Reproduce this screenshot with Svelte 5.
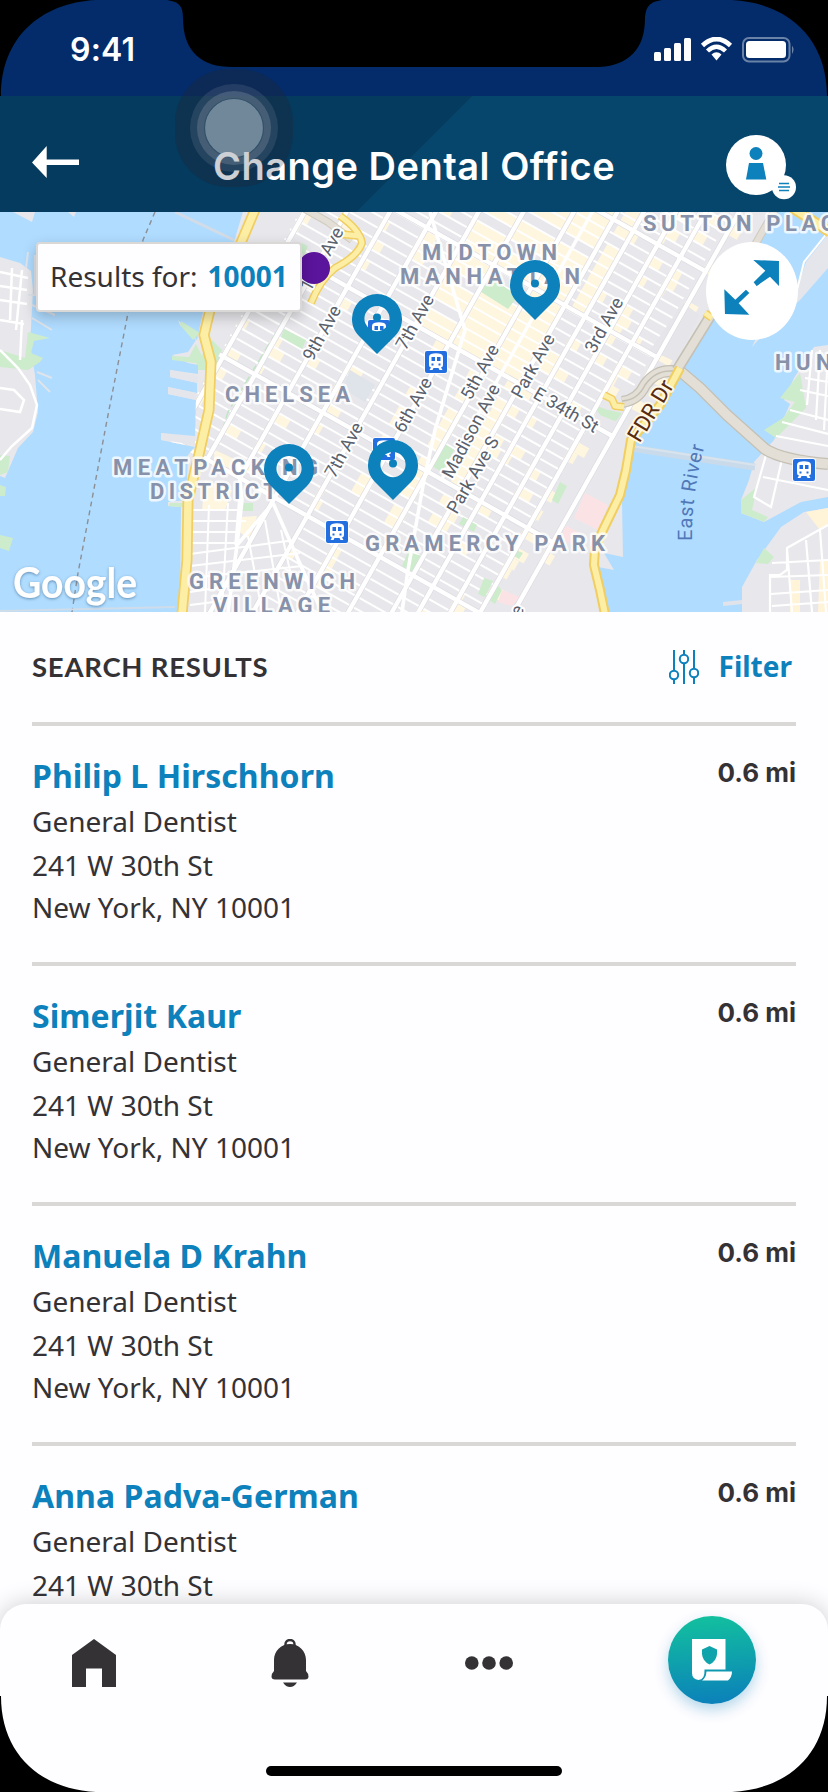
<script>
  const offices = [
    { name: 'Philip L Hirschhorn' },
    { name: 'Simerjit Kaur' },
    { name: 'Manuela D Krahn' },
    { name: 'Anna Padva-German' }
  ];

  const pins = [
    [377, 294],
    [535, 260],
    [289, 444],
    [393, 440]
  ];
  const stations = [
    [425, 351],
    [326, 521],
    [793, 459],
    [373, 438],
    [368, 320]
  ];

  // Manhattan grid in rotated coordinates: avenues run along v, streets along u.
  const avenues = [369.5, 406, 443.6, 483.6, 521, 560, 604, 642, 665, 693, 719, 748];
  const majors = [-110, -11.3, 79.3, 201, 298.6];
  const streets = [];
  for (let k = -26; k < 33; k++) streets.push(79.3 + 11.05 * k);

  const hash = (a, b) => {
    const s = Math.sin(a * 127.1 + b * 311.7) * 43758.5453;
    return s - Math.floor(s);
  };
  const blocks = [];
  streets.forEach((v, j) => {
    avenues.forEach((u, i) => {
      const w = (avenues[i + 1] ?? u + 34) - u;
      const r = hash(i + 1, j + 1);
      const midtown = u > 515 && u < 660 && v < 75;
      const core = midtown && u < 610;
      const flat = u > 510 && u < 640 && v > 75 && v < 260;
      if (core && r < 0.82) blocks.push([u, v, w]);
      else if (midtown && r < 0.75) blocks.push([u + w * 0.3, v, w * 0.7]);
      else if (flat && r < 0.5) blocks.push([u + w - 13, v, 16]);
      else if (r < 0.26) blocks.push([u - 3, v, 6 + r * 50]);
    });
  });

  const areas = [
    ['CHELSEA', 225, 402, 125],
    ['MIDTOWN', 422, 260, 135],
    ['MANHATTAN', 400, 284, 180],
    ['SUTTON PLACE', 643, 231, 209],
    ['HUNTERS', 775, 370, 132],
    ['MEATPACKING', 113, 475, 205],
    ['DISTRICT', 150, 499, 127],
    ['GRAMERCY PARK', 365, 551, 240],
    ['GREENWICH', 189, 589, 166],
    ['VILLAGE', 213, 613, 117]
  ];
  const roads = [
    ['9th Ave', 322, 333, -61],
    ['7th Ave', 415, 322, -61],
    ['7th Ave', 344, 450, -61],
    ['6th Ave', 413, 405, -61],
    ['5th Ave', 480, 372, -61],
    ['Madison Ave', 471, 431, -62],
    ['Park Ave S', 473, 475, -60],
    ['Park Ave', 533, 366, -61],
    ['3rd Ave', 604, 325, -61],
    ['11th Ave', 322, 259, -61],
    ['E 34th St', 566, 410, 30],
    ['Avenue', 505, 632, -61]
  ];
</script>

{#snippet train(x, y)}
  <g transform="translate({x} {y})">
    <rect x="-1" y="-1" width="24" height="24" rx="3" fill="#fff" opacity=".8" />
    <rect width="22" height="22" rx="2" fill="#246fe0" />
    <path d="M6 3Q11 1.5 16 3Q18 4 18 6V14Q18 16 16 16.5L17.5 19H14.5L13.5 17H8.5L7.5 19H4.500L6 16.500Q4 16 4 14V6Q4 4 6 3Z" fill="#fff" />
    <path d="M6.500 6H10V10H6.500ZM12 6H15.500V10H12ZM6.500 12.500H8.500V14.500H6.500ZM13.500 12.500H15.500V14.500H13.500Z" fill="#246fe0" />
  </g>
{/snippet}

<div class="phone">
  <div class="status">
    <span class="time">9:41</span>
    <svg width="142" height="26" viewBox="0 0 142 26">
      <g fill="#fff">
        <rect x="1" y="15" width="7" height="9" rx="1.500" />
        <rect x="11" y="11" width="7" height="13" rx="1.500" />
        <rect x="21" y="6" width="7" height="18" rx="1.500" />
        <rect x="31" y="1" width="7" height="23" rx="1.500" />
        <path d="M58.500 17.500Q63.500 13 68.500 17.500L63.500 23.500Z" />
        <rect x="93" y="4" width="40" height="17" rx="3.500" />
      </g>
      <path d="M49.500 8.500Q63.500 -4.500 77.500 8.500" fill="none" stroke="#fff" stroke-width="4.600" />
      <path d="M54.500 14Q63.500 5.500 72.500 14" fill="none" stroke="#fff" stroke-width="4.400" />
      <rect x="90" y="1" width="46.500" height="23.500" rx="6" fill="none" stroke="#6b82a8" stroke-width="2" />
      <path d="M139 8.500Q142 12.500 139 17Z" fill="#6b82a8" />
    </svg>
  </div>

  <header>
    <svg class="back" width="48" height="32" viewBox="0 0 48 32">
      <path d="M0 16.500L14.700 0V13.500H47V19H14.700V32Z" fill="#fff" />
    </svg>
    <h1>Change Dental Office</h1>
    <svg class="user" width="70" height="65" viewBox="0 0 70 65">
      <circle cx="30" cy="30" r="30" fill="#fff" />
      <circle cx="30" cy="18.500" r="6.500" fill="#0c81bb" />
      <path d="M23 28H37L40.300 44.500H20Z" fill="#0c81bb" />
      <circle cx="58" cy="52.300" r="12" fill="#fff" />
      <path d="M53 48.500H63M52 52H64M53 55.500H63" stroke="#0c81bb" stroke-width="1.500" />
    </svg>
  </header>

  <section class="map">
    <svg class="canvas" width="828" height="400" viewBox="0 212 828 400">
      <defs>
        <clipPath id="island">
          <path d="M245 205L236 235L228 270L203 312L197 340L178 320L180 325L196 340L188 352L172 355L188 363L198 365V374L170 370V377L197 383V393L168 387V394L196 400L195 438L161 433V440L195 447L188 455L186 500L168 502V506L181 507L180 612H609L598 567L614 570L604 553L623 557L622 503L634 440L659 408L681 366L712 320L755 240L782 205Z" />
        </clipPath>
        <filter id="soft" x="-20%" y="-20%" width="140%" height="150%">
          <feDropShadow dx="0" dy="1" stdDeviation="1.500" flood-color="#3c6a90" flood-opacity=".7" />
        </filter>
      </defs>
      <rect y="212" width="828" height="400" fill="#b0dcff" />

      <!-- New Jersey shore -->
      <path d="M13 212H35L32 222ZM68 212H76L74 217Z" fill="#e8e7eb" />
      <path d="M0 257L20 263L31 271L33 290L30 345L35 375L38 412L33 432L18 448L5 478L0 476Z" fill="#e8e7eb" />
      <path d="M28 332L50 338L34 341L31 353L43 358L40 362L28 370L0 367V350L25 358Z" fill="#cdeccc" />
      <path d="M0 455L10 456L8 472L0 475ZM0 485L6 487L5 496H0ZM0 535L13 538L9 551L0 548Z" fill="#cdeccc" />
      <path d="M0 272L28 278M0 286L27 290M0 300L27 304M0 320L24 324M12 268L10 320M22 270L16 330M0 350L18 368L30 385L37 405L32 428L12 446L0 460M0 388L14 390L24 400L20 412L0 409M22 320L20 360" fill="none" stroke="#fff" stroke-width="2.500" />
      <path d="M32 318L52 330M32 305L55 315M38 380L50 392M37 372L52 378M28 295H35V255M28 252L26 268" fill="none" stroke="#dfe3ea" stroke-width="2" />
      <path d="M175 212L236 241" stroke="#d3dce6" stroke-width="3" />
      <path d="M155 212L143 240L128 313L108 415L78 573L72 612" fill="none" stroke="#8d8f94" stroke-width="1.400" stroke-dasharray="5 4" />
      <path d="M0 611L175 607" stroke="#cfdcea" stroke-width="2" />

      <!-- Queens and Roosevelt Island -->
      <path d="M828 234L806 262L796 292L760 338L752 347L756 338L800 300L828 268Z" fill="#e4e6ec" />
      <path d="M828 232L804 262L797 290" fill="none" stroke="#fff" stroke-width="2" />
      <path d="M828 345L814 347L794 378L784 400L790 404L774 440L754 462L749 480L741 500V513L764 522L801 502L828 497Z" fill="#e8e7eb" />
      <path d="M800 373L780 398L795 402L783 418L764 430L776 438L806 408ZM757 487L741 500V513L764 522L768 517L752 510Z" fill="#cdeccc" />
      <path d="M828 508L804 512L781 527L757 560L742 587V612H828Z" fill="#e8e7eb" />
      <path d="M828 508L806 512L820 530L828 525ZM790 580H800V612H790ZM820 560H828V612H818Z" fill="#fff3d8" />
      <path d="M764 548L774 557L768 564L756 563Z" fill="#cdeccc" />
      <path d="M742 602L723 604" stroke="#e0e4ea" stroke-width="4" />
      <path d="M812 350L807 405M820 350L816 420M805 378L828 382M800 390L828 396M790 410L828 420M782 422L828 434M776 436L828 446M828 352L824 430M766 455L754 497L771 507L783 455M763 477L828 490M828 525L787 548V570L780 575H770V612M828 560L772 563M828 575L770 577M828 590L771 594M828 602L772 606M787 548L792 612M806 540L812 612M820 530L826 612" fill="none" stroke="#fff" stroke-width="2.200" />

      <!-- Manhattan -->
      <g clip-path="url(#island)">
        <rect y="205" width="828" height="410" fill="#e8e7eb" />
        <g transform="rotate(29.4)">
          {#each blocks as [u, v, w]}
            <rect x={u} y={v} width={w} height="11.050" fill="#fff6df" />
          {/each}
          {#each streets as v}
            <path d="M{v > 310 ? 520 : 365} {v}H{v < 30 ? 742 : 722}" stroke="#fff" stroke-width="2" />
          {/each}
        </g>
        <path d="M186 505L273 495L300 510L262 612H180Z" fill="#e8e7eb" />
        <path d="M600 438L635 445L620 500L600 535L560 512ZM545 575L595 560L605 612H520Z" fill="#e8e7eb" />
        <path d="M683 303L700 315L676 362L650 350Z" fill="#e6e5ea" />
        <path d="M585 493L608 505L598 530L574 518Z" fill="#fbe3e5" />
        <path d="M565 525L580 533L572 545L562 538ZM502 590L520 597L512 606L498 602Z" fill="#fbe3e5" />
        <path d="M205 480L232 490L225 510H202ZM240 517L257 516L250 540L237 530ZM215 450L236 460L230 475L213 466Z" fill="#fff6df" />
        <path d="M350 370L375 385L365 402L342 388Z" fill="#dfe3ea" />
        <g fill="#cdeccc">
          <path d="M490 277L518 296L508 309L478 290ZM442 442L454 450L442 472L430 465ZM284 329L306 340L302 349L281 337ZM463 517L477 525L474 532L459 524ZM560 482L567 486L558 504L552 500ZM484 578L493 581L485 597L478 594ZM497 585L502 590L495 604L489 600ZM408 552L422 556L414 573L402 566ZM604 409L622 413L616 421L603 415ZM594 405L619 414L615 421L600 415ZM516 550L523 553L519 559L514 556ZM170 503H183V507H168ZM164 581H182V586H164ZM140 597H180V601H140ZM243 503H253V511H242ZM192 370L212 340L222 350L215 370ZM302 243L308 246L304 256L299 250Z" />
        </g>
        <path d="M283 321L228 412L217 447" fill="none" stroke="#bfe6c2" stroke-width="1.500" stroke-dasharray="9 4" />
        <g transform="rotate(29.4)" fill="none">
          {#each avenues as u}
            <path d="M{u} -240V{u < 480 ? 298 : 450}" stroke="#d9d9e0" stroke-width="5.600" />
          {/each}
          {#each majors as v}
            <path d="M365 {v}H750" stroke="#d9d9e0" stroke-width="5.600" />
          {/each}
          {#each avenues as u}
            <path d="M{u} -240V{u < 480 ? 298 : 450}" stroke="#fff" stroke-width="4.400" />
          {/each}
          {#each majors as v}
            <path d="M365 {v}H750" stroke="#fff" stroke-width="4.400" />
          {/each}
          <path d="M620 -200V200" stroke="#fff" stroke-width="3.400" />
        </g>
        <path d="M430 212L465 330L435 430L424 480L408 570L402 612M273 503L305 575L322 612M273 503L237 545L228 612M240 497L236 545M238 463L242 500L237 545" fill="none" stroke="#fff" stroke-width="3.600" />
        <path d="M190 510H240M190 521H246M190 532H240M192 543H236M190 554L295 540M190 566L300 553M190 578L302 566M190 592L230 586M190 605L230 600M209 505L205 612M228 503L222 612M248 536L262 612M265 520L281 612M281 530L292 580" fill="none" stroke="#fff" stroke-width="2" />
      </g>
      <path d="M170 370L198 376V383L170 377ZM168 387L196 393V400L168 394ZM161 433L195 436V445L162 440Z" fill="#e4e6ec" />
      <path d="M181 321L200 333L193 340L180 325ZM196 344L189 357L172 356V360L195 363L205 362Z" fill="#cdeccc" />
      <path d="M631 448L755 467" stroke="#c9dbea" stroke-width="7" />
      <path d="M631 446L755 465" stroke="#d8e3ed" stroke-width="2" />

      <!-- Highways -->
      <g fill="none" stroke-linejoin="round">
        <path d="M298 205L328 222L352 240M775 210L752 250" stroke="#cfcabd" stroke-width="8" />
        <path d="M298 205L328 222L352 240M775 210L752 250" stroke="#e3dfd6" stroke-width="6" />
        <path d="M622 402Q638 400 645 385Q655 371 670 371H680L700 388L727 415L765 449Q782 460 828 464" stroke="#c5c0b4" stroke-width="12" />
        <path d="M622 402Q638 400 645 385Q655 371 670 371H680L700 388L727 415L765 449Q782 460 828 464" stroke="#e3dfd6" stroke-width="9.500" />
        <path d="M622 401Q638 400 645 385Q655 371 670 371H680" stroke="#c5c0b4" stroke-width="1.500" />
        <path d="M677 370L711 315" stroke="#c5c0b4" stroke-width="11" />
        <path d="M677 370L711 315" stroke="#e3dfd6" stroke-width="8" />
        <g stroke="#f0ce62" stroke-width="11">
          <path d="M257 205L240 245L210 310L204 335L211 362L209 410L200 450L188 500L187 560L182 614" />
          <path d="M680 368L660 405L631 440L626 470L620 495L603 530L595 548L594 565L600 590L605 614" stroke-width="10" />
          <path d="M340 216Q360 230 362 243Q358 256 335 268Q320 280 311 303M340 234L360 236M604 395L612 399L615 406L624 407M705 313L712 318" stroke-width="8" />
        </g>
        <g stroke="#fdeea6" stroke-width="7.500">
          <path d="M257 205L240 245L210 310L204 335L211 362L209 410L200 450L188 500L187 560L182 614" />
          <path d="M680 368L660 405L631 440L626 470L620 495L603 530L595 548L594 565L600 590L605 614" stroke-width="6" />
          <path d="M340 216Q360 230 362 243Q358 256 335 268Q320 280 311 303M340 234L360 236M604 395L612 399L615 406L624 407M705 313L712 318" stroke-width="5" />
        </g>
        <path d="M788 205L830 232" stroke="#f0ce62" stroke-width="11" />
        <path d="M788 205L830 232" stroke="#fdeea6" stroke-width="7" />
      </g>

      <g class="roads">
        {#each roads as [label, x, y, r]}
          <text transform="translate({x} {y}) rotate({r})" text-anchor="middle" dy="6">{label}</text>
        {/each}
        <text class="fdr" transform="translate(651 411) rotate(-59)" text-anchor="middle" dy="7">FDR Dr</text>
        <path id="river" d="M692 541Q691 495 706 440" fill="none" />
        <text class="river"><textPath href="#river" textLength="96">East River</textPath></text>
      </g>
      <g class="areas">
        {#each areas as [label, x, y, w]}
          <text {x} {y} textLength={w}>{label}</text>
        {/each}
      </g>

      {#each stations as [x, y]}
        {@render train(x, y)}
      {/each}
      <circle cx="314" cy="268" r="16" fill="#5b149c" />
      {#each pins as [x, y]}
        <g transform="translate({x} {y})" fill="#0c81bb">
          <path fill-rule="evenodd" d="M0 60L-18 42C-23 37 -25 31 -25 25A25 25 0 0 1 25 25C25 31 23 37 18 42ZM0 12A12.600 12.600 0 0 0 0 37.200A12.600 12.600 0 0 0 0 12Z" />
          <circle cy="23.500" r="4" />
        </g>
      {/each}
      <text class="google" x="13" y="598" textLength="124" lengthAdjust="spacingAndGlyphs" filter="url(#soft)">Google</text>

      <ellipse cx="752" cy="291" rx="46" ry="49" fill="#fff" />
      <g transform="translate(414 205) scale(.3333)" fill="#0c81bb">
        <path d="M1018 165L1095 168V243L1068 215L1029 242L1019 232L1054 197Z" />
        <path d="M1021 233L1058 198L1070 209L1028 243ZM1006 264L974 295L1006 329L933 327L931 253L964 284L996 254Z" />
      </g>
    </svg>
    <div class="zip">Results for:<b>10001</b></div>
  </section>

  <main>
    <div class="heading">
      <h2>SEARCH RESULTS</h2>
      <div class="filter">
        <svg width="30" height="34" viewBox="0 0 30 34">
          <g fill="none" stroke="#0c81bb" stroke-width="2">
            <path d="M5 0V20M5 30V34M15 0V4M15 14V34M25 0V18M25 28V34" />
            <circle cx="5" cy="25" r="4.200" />
            <circle cx="15" cy="9" r="4.200" />
            <circle cx="25" cy="23" r="4.200" />
          </g>
        </svg>
        <span>Filter</span>
      </div>
    </div>
    {#each offices as office}
      <article>
        <div class="info">
          <h3>{office.name}</h3>
          <p>General Dentist</p>
          <p class="street">241 W 30th St</p>
          <p>New York, NY 10001</p>
        </div>
        <span class="miles">0.6 mi</span>
      </article>
    {/each}
  </main>

  <nav>
    <svg width="44" height="48" viewBox="0 0 44 48">
      <path d="M22 0L44 16V48H30V29.500H14V48H0V16Z" fill="#343235" />
    </svg>
    <svg width="38" height="48" viewBox="0 0 38 48">
      <path d="M14.500 7V5A4.500 4 0 0 1 23.500 5V7" fill="none" stroke="#343235" stroke-width="2.400" />
      <path d="M19 5C28 5 35 12 35 21V32Q38 35 37.500 38Q37 40.500 34 40.500H4Q1 40.500 .500 38Q0 35 3 32V21C3 12 10 5 19 5ZM12 43.500H26Q23 48 19 48Q15 48 12 43.500Z" fill="#343235" />
    </svg>
    <svg width="48" height="14" viewBox="0 0 48 14" fill="#343235">
      <circle cx="6.800" cy="7" r="6.800" /><circle cx="24" cy="7" r="6.800" /><circle cx="41.200" cy="7" r="6.800" />
    </svg>
    <div class="plan">
      <svg width="40" height="43" viewBox="0 0 40 43">
        <path d="M0 0H33.500V30.500H12.500Q13 41 6.500 41Q0 40 0 34Z" fill="#fff" />
        <path d="M14.500 32.500H40Q40 38 36 41.500H10Q14 39 14.500 32.500Z" fill="#fff" />
        <path d="M17.500 7L25 10.500V15Q24.500 22 17.500 25.500Q10.500 22 10 15V10.500Z" fill="#0fa4ab" />
      </svg>
    </div>
  </nav>

  <svg class="touch" width="118" height="118" viewBox="175 69 118 118">
    <rect x="175" y="69" width="118" height="118" rx="54" fill="#1d2a40" opacity=".28" />
    <circle cx="234" cy="128" r="44" fill="#8494ad" opacity=".24" />
    <circle cx="234" cy="128" r="37" fill="#8fa2b0" opacity=".4" />
    <circle cx="234" cy="128" r="29.500" fill="#89a3b5" stroke="#3a5c74" stroke-width="1.200" />
  </svg>
  <svg class="overlay" width="828" height="1792" viewBox="0 0 828 1792">
    <rect x="175" y="69" width="118" height="118" rx="54" fill="#1d2a40" opacity=".22" />
    <rect x="266" y="1766" width="296" height="10" rx="5" />
    <path d="M0 0H96C40 3 1 38 1 96H0ZM828 0H732C788 3 827 38 827 96H828Z" />
    <path d="M167 0C180 2 183 7 183 18C183 52 202 67 232 67H600C628 65 645 50 645 18C646 7 649 2 662 0Z" />
    <path d="M0 1792H96C40 1789 1 1754 1 1696H0ZM828 1792H732C788 1789 827 1754 827 1696H828Z" />
  </svg>
</div>

<style>
  :global(body) { margin: 0; }
  .phone {
    position: relative;
    display: flex;
    flex-direction: column;
    width: 828px;
    height: 1792px;
    overflow: hidden;
    background: #fefdff;
    color: #343235;
    font-family: 'Noto Sans', 'Open Sans', sans-serif;
  }
  h1, h2, h3, p { margin: 0; }
  svg { display: block; flex: none; }
  .status {
    display: flex;
    justify-content: space-between;
    height: 96px;
    padding: 0 33px 0 70px;
    box-sizing: border-box;
    background: #042c6a;
  }
  .status svg { margin-top: 37px; }
  .time {
    margin-top: 30px;
    color: #fff;
    font: 600 32px/40px Inter, sans-serif;
    letter-spacing: 0.2px;
  }
  header {
    display: flex;
    align-items: flex-start;
    height: 116px;
    padding-left: 32px;
    box-sizing: border-box;
    background: linear-gradient(135deg, #053b5e 0 333.5px, #07466c 334.5px);
  }
  .back { margin-top: 50px; }
  h1 {
    position: relative;
    z-index: 2;
    width: 512px;
    margin: 46px 0 0 78px;
    color: #fff;
    text-align: center;
    white-space: nowrap;
    font: 600 38px/48px Inter, sans-serif;
    letter-spacing: 0.5px;
  }
  .user { margin: 39px 0 0 56px; }
  .map { position: relative; height: 400px; flex: none; }
  .areas text {
    font: 700 22px Roboto, sans-serif;
    fill: #8791a9;
    stroke: rgba(255, 255, 255, 0.8);
    stroke-width: 5px;
    stroke-linejoin: round;
    paint-order: stroke;
  }
  .roads text {
    font: 400 18px Roboto, sans-serif;
    fill: #5a616c;
    stroke: #fff;
    stroke-width: 4px;
    stroke-linejoin: round;
    paint-order: stroke;
  }
  .roads .fdr { font-size: 22px; fill: #572b10; stroke: #fff8e5; }
  .roads .river { font-size: 20px; font-weight: 400; fill: #5078b8; stroke: none; }
  .google { font: 700 42px Lato, sans-serif; fill: #fff; }
  .zip {
    position: absolute;
    left: 36px;
    top: 30px;
    display: flex;
    align-items: center;
    gap: 10px;
    width: 266px;
    height: 70px;
    padding: 0 0 2px 12px;
    box-sizing: border-box;
    border: 2px solid #d9d8d7;
    border-radius: 4px;
    background: #fefdff;
    box-shadow: 0 5px 14px rgba(0, 0, 0, 0.22);
    font-size: 28px;
    white-space: nowrap;
  }
  .zip b { color: #0c81bb; }
  main { padding: 0 32px; }
  .heading {
    display: flex;
    justify-content: space-between;
    align-items: center;
    height: 110px;
  }
  h2 { font: 700 27.5px/36px Lato, sans-serif; letter-spacing: 0.75px; }
  .filter {
    display: flex;
    align-items: center;
    gap: 20px;
    padding-right: 4px;
    color: #0c81bb;
    font-size: 28px;
    line-height: 38px;
    font-weight: 700;
  }
  .filter span { margin-top: -2px; }
  article {
    display: flex;
    justify-content: space-between;
    height: 240px;
    padding-top: 26px;
    box-sizing: border-box;
    border-top: 4px solid #d9d8d7;
  }
  h3 { color: #0c81bb; font-size: 32px; line-height: 48px; letter-spacing: 0.06px; }
  p { font-size: 28px; line-height: 42px; }
  .street { margin-top: 2px; }
  .miles { font: 700 26px/36px Inter, sans-serif; margin-top: 3px; }
  nav {
    position: absolute;
    left: 0;
    bottom: 0;
    display: flex;
    align-items: flex-start;
    width: 828px;
    height: 188px;
    padding: 35px 72px 0;
    box-sizing: border-box;
    justify-content: space-between;
    border-radius: 26px 26px 0 0;
    background: #fefdff;
    box-shadow: 0 0 24px rgba(0, 0, 0, 0.2);
  }
  nav > svg:nth-child(3) { margin: 17px 0 0 0; }
  .plan {
    display: flex;
    width: 88px;
    height: 88px;
    margin-top: -23px;
    padding: 23px 0 0 24px;
    box-sizing: border-box;
    border-radius: 50%;
    background: linear-gradient(175deg, #13c29d, #0fa4ab 45%, #0b7ebb);
    box-shadow: 0 6px 14px rgba(12, 129, 187, 0.3);
  }
  .touch { position: absolute; z-index: 1; left: 175px; top: 69px; }
  .overlay { position: absolute; z-index: 3; inset: 0; }
</style>
